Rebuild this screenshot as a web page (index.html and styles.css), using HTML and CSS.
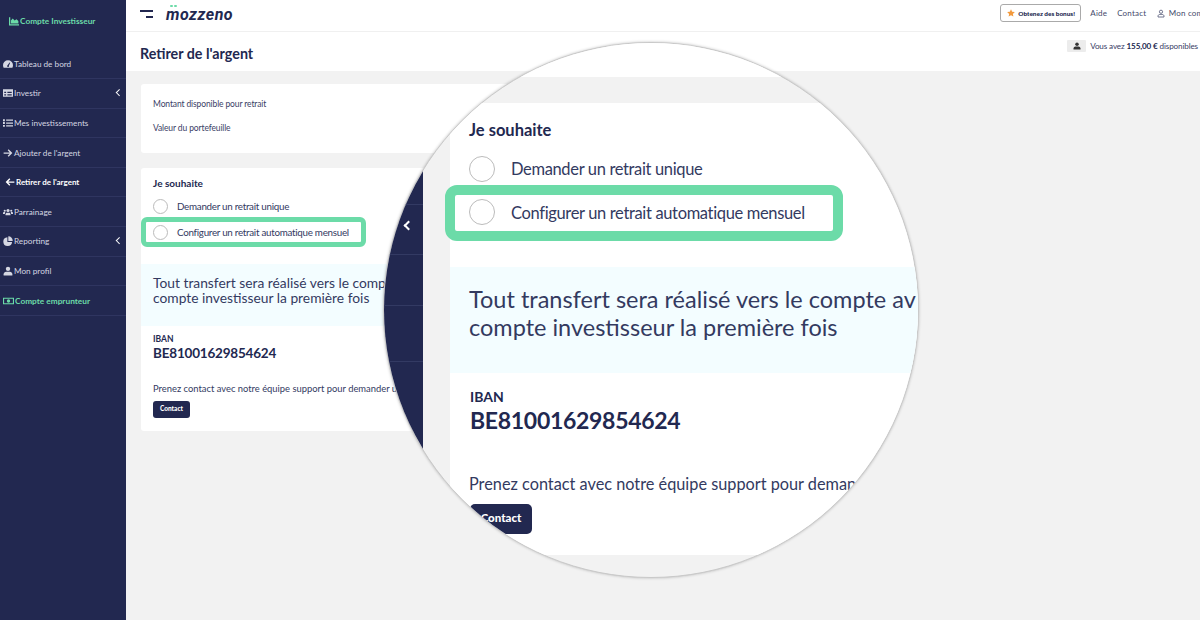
FILE: index.html
```html
<!DOCTYPE html>
<html lang="fr">
<head>
    <meta charset="UTF-8">
    <meta name="viewport" content="width=device-width, initial-scale=1.0">
    <title>Retirer de l'argent</title>
    <link rel="stylesheet" href="styles.css">
</head>
<body>

    <aside class="sidebar">
        <div class="compte">
            <svg class="ico" viewBox="0 0 16 16"><path d="M0 2h2v11h14v2H0z"/><path d="M3 12V7l3-3 3 3 3-2 3 3v4z"/></svg>
            Compte Investisseur
        </div>
        <nav class="menu">
            <a class="item">
                <svg class="ico" viewBox="0 0 16 16"><path fill-rule="evenodd" d="M8 2a8 8 0 0 1 8 8c0 1.500-.4 2.800-1 4H1c-.6-1.200-1-2.500-1-4a8 8 0 0 1 8-8zM7 10.200a1.500 1.500 0 1 0 2.400.6L11.500 6l-1-.4z"/></svg>
                Tableau de bord
            </a>
            <a class="item">
                <svg class="ico" viewBox="0 0 16 16"><path fill-rule="evenodd" d="M0 2h16v12H0zM2 6v2h3V6zm5 0v2h7V6zm-5 4v2h3v-2zm5 0v2h7v-2z"/></svg>
                Investir
                <span class="chevron"></span>
            </a>
            <a class="item">
                <svg class="ico" viewBox="0 0 16 16"><path d="M0 2h3v3H0zM5 2.500h11v2H5zM0 6.500h3v3H0zM5 7h11v2H5zM0 11h3v3H0zM5 11.500h11v2H5z"/></svg>
                Mes investissements
            </a>
            <a class="item">
                <svg class="ico" viewBox="0 0 16 16"><path d="M9 2l6 6-6 6-1.500-1.500L10.800 9H1V7h9.800L7.500 3.500z"/></svg>
                Ajouter de l'argent
            </a>
            <a class="item actif">
                <svg class="ico" viewBox="0 0 16 16"><path d="M7 2L1 8l6 6 1.500-1.500L5.200 9H15V7H5.200l3.300-3.500z"/></svg>
                Retirer de l'argent
            </a>
            <a class="item">
                <svg class="ico" viewBox="0 0 16 16"><circle cx="8" cy="5.500" r="2.500"/><circle cx="2.800" cy="6" r="1.700"/><circle cx="13.200" cy="6" r="1.700"/><path d="M4 13v-1.500C4 10 5 9 6.500 9h3c1.500 0 2.500 1 2.500 2.500V13zM0 11V9.500C0 8.500.7 8 1.500 8h2L3 11zM16 11V9.500c0-1-.7-1.500-1.500-1.500h-2l.5 3z"/></svg>
                Parrainage
            </a>
            <a class="item">
                <svg class="ico" viewBox="0 0 16 16"><path d="M7 2v7.500h7.500A7 7 0 1 1 7 2z"/><path d="M8.500 0.500A7 7 0 0 1 15.500 8h-7z"/></svg>
                Reporting
                <span class="chevron"></span>
            </a>
            <a class="item">
                <svg class="ico" viewBox="0 0 16 16"><circle cx="8" cy="4.500" r="3.500"/><path d="M1 15v-2c0-2.500 2-4 4-4h6c2 0 4 1.500 4 4v2z"/></svg>
                Mon profil
            </a>
            <a class="item vert">
                <svg class="ico ico-large" viewBox="0 0 20 14"><path fill-rule="evenodd" d="M0 1h20v12H0zM2 3v8h16V3zm8 1a3 3 0 1 1 0 6 3 3 0 0 1 0-6z"/></svg>
                Compte emprunteur
            </a>
        </nav>
    </aside>

    <div class="page">
        <header class="topbar">
            <div class="burger"><span></span><span></span></div>
            <div class="logo">mozzeno<i class="points"></i></div>
            <div class="liens">
                <button class="bonus">
                    <svg class="etoile" viewBox="0 0 16 16"><path d="M8 .5l2.300 5 5.400.6-4 3.700 1.100 5.400L8 12.500l-4.800 2.700 1.100-5.400-4-3.700 5.400-.6z"/></svg>
                    Obtenez des bonus!
                </button>
                <a class="lien">Aide</a>
                <a class="lien">Contact</a>
                <a class="lien lien-compte">
                    <svg class="ico-compte" viewBox="0 0 16 16"><circle cx="8" cy="4.500" r="3.200"/><path d="M2 15v-1.500C2 11 4 9.800 6 9.800h4c2 0 4 1.200 4 3.700V15z"/></svg>
                    Mon compte
                </a>
            </div>
        </header>

        <div class="titre-bar">
            <h1 class="titre">Retirer de l'argent</h1>
            <div class="solde">
                <span class="solde-ico">
                    <svg viewBox="0 0 16 16"><circle cx="8" cy="4.500" r="3.500"/><path d="M1 15v-2c0-2.500 2-4 4-4h6c2 0 4 1.500 4 4v2z"/></svg>
                </span>
                Vous avez&nbsp;<b>155,00 €</b>&nbsp;disponibles
            </div>
        </div>

        <main class="contenu">
            <section class="carte carte-haut">
                <p>Montant disponible pour retrait</p>
                <p>Valeur du portefeuille</p>
            </section>

            <section class="carte carte-retrait">
                <h2 class="souhaite">Je souhaite</h2>
                <label class="choix"><span class="radio"></span>Demander un retrait unique</label>
                <label class="choix choix-vert"><span class="radio"></span>Configurer un retrait automatique mensuel</label>
                <div class="info">Tout transfert sera réalisé vers le compte avec lequel vous avez<br>compte investisseur la première fois</div>
                <div class="iban">
                    <small>IBAN</small>
                    <strong>BE81001629854624</strong>
                </div>
                <p class="support">Prenez contact avec notre équipe support pour demander un changement</p>
                <button class="bouton">Contact</button>
            </section>
        </main>
    </div>

    <!-- loupe posee par dessus la page -->
    <div class="loupe">
        <div class="loupe-haut"></div>
        <div class="loupe-corps">
            <div class="loupe-nav">
                <div class="loupe-ligne loupe-ligne-1"></div>
                <div class="loupe-ligne loupe-ligne-2"><span class="chevron chevron-large"></span></div>
                <div class="loupe-ligne loupe-ligne-3"></div>
                <div class="loupe-ligne loupe-ligne-4"></div>
            </div>
            <section class="loupe-carte">
                <h2 class="souhaite">Je souhaite</h2>
                <label class="choix"><span class="radio"></span>Demander un retrait unique</label>
                <label class="choix choix-vert"><span class="radio"></span>Configurer un retrait automatique mensuel</label>
                <div class="info">Tout transfert sera réalisé vers le compte av<br>compte investisseur la première fois</div>
                <div class="iban">
                    <small>IBAN</small>
                    <strong>BE81001629854624</strong>
                </div>
                <p class="support">Prenez contact avec notre équipe support pour demand</p>
                <button class="bouton">Contact</button>
            </section>
        </div>
    </div>

</body>
</html>
```

FILE: styles.css
```css
* {
    box-sizing: border-box;
}

body {
    margin: 0;
    width: 1200px;
    height: 620px;
    display: flex;
    overflow: hidden;
    position: relative;
    background: #f2f2f2;
    color: #222850;
    font-family: 'Lato', sans-serif;
}

/* Menu de gauche */
.sidebar {
    width: 126px;
    flex-shrink: 0;
    background: #222850;
    color: #d5d7e2;
}

.compte {
    height: 49.5px;
    padding: 15px 0 0 9px;
    display: flex;
    align-items: flex-start;
    gap: 1px;
    font-size: 8.300px;
    font-weight: 700;
    line-height: 12px;
    color: #6cdba8;
}

.compte .ico {
    margin-top: 1px;
}

.item {
    height: 29.6px;
    padding-left: 3px;
    display: flex;
    align-items: center;
    gap: 1px;
    font-size: 8.200px;
    border-bottom: 1px solid #2f3560;
    white-space: nowrap;
}

.item.actif {
    padding-left: 5px;
    color: #fff;
    font-weight: 700;
    font-size: 8px;
}

.item.vert {
    color: #6cdba8;
    font-weight: 700;
    font-size: 8.300px;
}

.ico {
    width: 10px;
    height: 10px;
    fill: currentColor;
    flex-shrink: 0;
}

.ico-large {
    width: 11px;
}

.chevron {
    width: 4.500px;
    height: 4.500px;
    margin-left: auto;
    margin-right: 5px;
    margin-top: -3px;
    border-left: 1.500px solid #fff;
    border-bottom: 1.500px solid #fff;
    transform: rotate(45deg);
}

/* Partie droite */
.page {
    flex: 1;
    min-width: 0;
    display: flex;
    flex-direction: column;
}

.topbar {
    height: 32px;
    padding-left: 14px;
    display: flex;
    align-items: center;
    background: #fff;
    border-bottom: 1px solid #f0f0f0;
}

.burger {
    width: 13px;
    display: flex;
    flex-direction: column;
    align-items: flex-end;
    gap: 4px;
    margin-top: -4px;
}

.burger span {
    display: block;
    height: 2px;
    width: 100%;
    background: #222850;
}

.burger span + span {
    width: 7px;
}

.logo {
    position: relative;
    margin-left: 13px;
    margin-top: -3px;
    font-family: 'Roboto', sans-serif;
    font-size: 16px;
    font-style: italic;
    font-weight: 700;
    letter-spacing: .5px;
}

.points {
    position: absolute;
    left: 4px;
    top: 0;
    width: 2.500px;
    height: 2.500px;
    border-radius: 50%;
    background: #6cdba8;
    box-shadow: 4px 0 0 #6cdba8;
}

.liens {
    margin-left: auto;
    margin-right: -15.500px;
    display: flex;
    align-items: center;
    font-size: 8px;
    margin-top: -5px;
}

.bonus {
    width: 81px;
    height: 18px;
    padding: 0 0 0 6px;
    display: flex;
    align-items: center;
    gap: 3px;
    background: #fff;
    border: 1px solid #aaa;
    border-radius: 3px;
    color: #222850;
    font-family: 'Lato', sans-serif;
    font-size: 6.400px;
    font-weight: 900;
    margin-right: 9px;
}

.etoile {
    width: 8px;
    height: 8px;
    fill: #f39a3d;
}

.lien {
    margin-right: 10px;
    letter-spacing: .2px;
    color: #444a6b;
    white-space: nowrap;
}

.lien-compte {
    margin-left: 1px;
    margin-right: 0;
    display: flex;
    align-items: center;
    gap: 3.500px;
}

.ico-compte {
    width: 8px;
    height: 9px;
    fill: none;
    stroke: #444a6b;
    stroke-width: 1.500;
}

.titre-bar {
    height: 39px;
    padding: 0 2px 0 14px;
    display: flex;
    justify-content: space-between;
    background: #fff;
}

.titre {
    margin: 13px 0 0;
    font-size: 14.300px;
    font-weight: 700;
    line-height: 18px;
}

.solde {
    margin-top: 7px;
    height: 13px;
    display: flex;
    align-items: center;
    font-size: 8.100px;
    letter-spacing: -.12px;
    color: #3a4066;
}

.solde b {
    color: #222850;
}

.solde-ico {
    width: 19px;
    height: 12px;
    margin-right: 4px;
    display: flex;
    align-items: center;
    justify-content: center;
    background: #ececec;
    border-radius: 1px;
}

.solde-ico svg {
    width: 8px;
    height: 8px;
    fill: #333;
}

.contenu {
    flex: 1;
    padding: 13px 0 0 15px;
}

.carte {
    width: 480px;
    background: #fff;
    border-radius: 3px;
}

.carte-haut {
    height: 69px;
    padding: 14px 12px 0;
    margin-bottom: 15px;
    font-size: 8.500px;
    letter-spacing: -.12px;
    color: #3a4066;
}

.carte-haut p {
    margin: 0 0 12px;
    line-height: 12px;
}

.carte-retrait {
    height: 263px;
    padding-top: 9px;
    overflow: hidden;
}

/* Contenu du formulaire, petite taille */
.souhaite {
    margin: 0 0 6px 12px;
    font-size: 10px;
    font-weight: 700;
    line-height: 13px;
}

.choix {
    height: 20px;
    margin-left: 12px;
    display: flex;
    align-items: center;
    font-size: 9.800px;
    letter-spacing: -.27px;
    color: #333a5f;
    white-space: nowrap;
}

.radio {
    width: 15px;
    height: 15px;
    margin-right: 9px;
    flex-shrink: 0;
    border: 1px solid #bbb;
    border-radius: 50%;
    background: #fff;
}

.choix-vert {
    width: 225px;
    height: 30px;
    margin: 1px 0 0;
    padding-left: 12px;
    border: 5px solid #6cdba8;
    border-radius: 6px;
}

.choix-vert .radio {
    margin-left: -5px;
}

.info {
    height: 62px;
    margin-top: 17px;
    padding: 11px 12px 0;
    overflow: hidden;
    background: #f3fdff;
    font-size: 13.800px;
    line-height: 15px;
    color: #333a5f;
    white-space: nowrap;
}

.iban {
    margin: 8px 0 0 12px;
    display: flex;
    flex-direction: column;
}

.iban small {
    font-size: 8.500px;
    font-weight: 700;
    line-height: 11px;
}

.iban strong {
    font-size: 13.500px;
    letter-spacing: -.2px;
    line-height: 17px;
}

.support {
    margin: 21px 0 0 12px;
    font-size: 9.400px;
    line-height: 12px;
    color: #333a5f;
    white-space: nowrap;
}

.bouton {
    width: 37px;
    height: 17px;
    margin: 6px 0 0 12px;
    display: block;
    padding: 0 0 2px;
    border: 0;
    border-radius: 3px;
    background: #222850;
    color: #fff;
    font-family: 'Lato', sans-serif;
    font-size: 6.500px;
    font-weight: 900;
}

/* Loupe */
.loupe {
    position: absolute;
    left: 383px;
    top: 42px;
    width: 536px;
    height: 536px;
    overflow: hidden;
    background: #f2f2f2;
    border: 1px solid #c9c9c9;
    border-radius: 50%;
    box-shadow: 0 0 3px rgba(0, 0, 0, .25);
}

.loupe-haut {
    height: 34px;
    background: #fff;
}

.loupe-corps {
    display: flex;
}

.loupe-nav {
    width: 39px;
    height: 500px;
    flex-shrink: 0;
    background: #222850;
}

.loupe-ligne {
    display: flex;
    align-items: center;
    border-bottom: 1px solid #333a63;
}

.loupe-ligne-1 {
    height: 128px;
}

.loupe-ligne-2 {
    height: 50px;
    padding-bottom: 8px;
}

.loupe-ligne-3 {
    height: 51px;
}

.loupe-ligne-4 {
    height: 56px;
}

.chevron-large {
    width: 7px;
    height: 7px;
    margin-right: 11px;
    margin-top: 0;
    border-width: 2.500px;
}

.loupe-carte {
    width: 500px;
    height: 452px;
    margin-top: 26px;
    margin-left: 27px;
    padding-top: 16px;
    background: #fff;
}

.loupe-carte .souhaite {
    margin: 0 0 11px 19px;
    font-size: 16.500px;
    line-height: 22px;
}

.loupe-carte .choix {
    height: 33px;
    margin-left: 19px;
    font-size: 16.500px;
    letter-spacing: -.35px;
}

.loupe-carte .radio {
    width: 26px;
    height: 26px;
    margin-right: 16px;
}

.loupe-carte .choix-vert {
    width: 398px;
    height: 56px;
    margin: 0 0 0 -5px;
    padding-left: 14px;
    border-width: 10px;
    border-radius: 12px;
}

.loupe-carte .choix-vert .radio {
    margin-left: 0;
    margin-top: -3px;
}

.loupe-carte .info {
    height: 106px;
    margin-top: 26px;
    padding: 18px 0 0 19px;
    font-size: 23.500px;
    line-height: 28px;
}

.loupe-carte .iban {
    margin: 14px 0 0 20px;
}

.loupe-carte .iban small {
    font-size: 14px;
    line-height: 20px;
}

.loupe-carte .iban strong {
    font-size: 23px;
    letter-spacing: -.3px;
    line-height: 27px;
}

.loupe-carte .support {
    margin: 39px 0 0 19px;
    font-size: 16.300px;
    line-height: 22px;
}

.loupe-carte .bouton {
    width: 62px;
    height: 30px;
    margin: 9px 0 0 20px;
    padding-bottom: 3px;
    border-radius: 5px;
    font-size: 11.500px;
}
```
